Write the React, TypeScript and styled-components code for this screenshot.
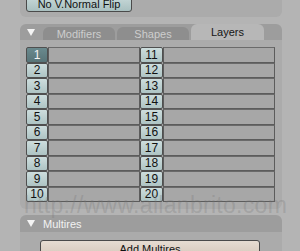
import React from 'react';
import styled, { createGlobalStyle } from 'styled-components';

const GlobalStyle = createGlobalStyle`
  html, body {
    margin: 0;
    padding: 0;
    background: #b3b3b3;
  }
  body {
    font-family: "Liberation Sans", Arial, sans-serif;
  }
`;

const Screen = styled.div`
  position: relative;
  width: 300px;
  height: 251px;
  overflow: hidden;
  background: #b4b4b4;
`;

const Column = styled.div`
  display: flex;
  flex-direction: column;
  width: 262px;
  margin-left: 20px;
`;

const TopPanel = styled.div`
  display: flex;
  align-items: flex-end;
  height: 17px;
  padding: 0 0 5px 6px;
  box-sizing: border-box;
  overflow: hidden;
  background: #ababab;
  border-radius: 0 0 6px 6px;
`;

const FlatButton = styled.button<{ $tone?: 'blue' | 'sand'; $w: number }>`
  flex: none;
  width: ${p => p.$w}px;
  height: 17px;
  padding: 0;
  border: 1px solid #4a4a4a;
  border-radius: 3px;
  font-family: inherit;
  font-size: 11px;
  color: #111;
  background: ${p =>
    p.$tone === 'sand'
      ? 'linear-gradient(#e6dcd2, #d6c8bb)'
      : 'linear-gradient(#c9dada, #a9c0c0)'};
`;

const Panel = styled.div<{ $gap: number }>`
  display: flex;
  flex-direction: column;
  margin-top: ${p => p.$gap}px;
`;

const Header = styled.div<{ $h: number }>`
  display: flex;
  align-items: flex-end;
  height: ${p => p.$h}px;
  background: #9d9d9d;
  border-radius: 6px 6px 0 0;
  position: relative;
`;

const Arrow = styled.span<{ $bottom: number }>`
  flex: none;
  width: 0;
  height: 0;
  margin: 0 8px ${p => p.$bottom}px 7px;
  border-left: 4px solid transparent;
  border-right: 4px solid transparent;
  border-top: 7px solid #f4f4f4;
`;

const Tabs = styled.div`
  display: flex;
  align-items: flex-end;
  gap: 2px;
  height: 100%;
`;

const Tab = styled.div<{ $active?: boolean; $w: number }>`
  display: flex;
  align-items: center;
  justify-content: center;
  width: ${p => p.$w}px;
  height: ${p => (p.$active ? 16 : 13)}px;
  border-radius: 6px 6px 0 0;
  font-size: 11px;
  color: ${p => (p.$active ? '#151515' : '#cdcdcd')};
  background: ${p => (p.$active ? '#b7b7b7' : '#8e8e8e')};
`;

const HeaderTitle = styled.span`
  font-size: 11px;
  color: #f2f2f2;
  align-self: center;
`;

const Body = styled.div<{ $h: number }>`
  height: ${p => p.$h}px;
  padding: 7px 7px 0 6px;
  box-sizing: border-box;
  background: #ababab;
  border-radius: 0 0 6px 6px;
`;

const Grid = styled.div`
  display: grid;
  grid-template-columns: 22px 92px 23px 112px;
  grid-auto-rows: 15.5px;
`;

const LayerNum = styled.div<{ $on?: boolean }>`
  display: flex;
  align-items: center;
  justify-content: center;
  border: 1px solid #4f4f4f;
  border-radius: 2px;
  font-size: 12px;
  color: ${p => (p.$on ? '#f4f4f4' : '#111')};
  background: ${p =>
    p.$on ? 'linear-gradient(#6a8a8e, #587478)' : 'linear-gradient(#cddddd, #aec4c4)'};
`;

const LayerField = styled.div`
  border: 1px solid #5c5c5c;
  border-top-color: #6a6a6a;
  background: #a7a7a7;
`;

const MultiresBody = styled.div`
  display: flex;
  justify-content: flex-start;
  height: 30px;
  padding: 8px 0 0 20px;
  box-sizing: border-box;
  background: #ababab;
`;

const Watermark = styled.div`
  position: absolute;
  left: 24px;
  top: 192px;
  font-size: 23px;
  letter-spacing: 0.3px;
  color: rgba(120, 120, 120, 0.3);
  white-space: nowrap;
  pointer-events: none;
`;

const rows = Array.from({ length: 10 }, (_, i) => i + 1);

export default function App() {
  return (
    <Screen>
      <GlobalStyle />
      <Column>
        <TopPanel>
          <FlatButton $w={106}>No V.Normal Flip</FlatButton>
        </TopPanel>

        <Panel $gap={7}>
          <Header $h={16}>
            <Arrow $bottom={4} />
            <Tabs>
              <Tab $w={72}>Modifiers</Tab>
              <Tab $w={72}>Shapes</Tab>
              <Tab $w={73} $active>
                Layers
              </Tab>
            </Tabs>
          </Header>
          <Body $h={169}>
            <Grid>
              {rows.map(n => (
                <React.Fragment key={n}>
                  <LayerNum $on={n === 1}>{n}</LayerNum>
                  <LayerField />
                  <LayerNum>{n + 10}</LayerNum>
                  <LayerField />
                </React.Fragment>
              ))}
            </Grid>
          </Body>
        </Panel>

        <Panel $gap={6}>
          <Header $h={17} style={{ alignItems: 'center', borderRadius: '6px 6px 0 0' }}>
            <Arrow $bottom={0} />
            <HeaderTitle>Multires</HeaderTitle>
          </Header>
          <MultiresBody>
            <FlatButton $w={220} $tone="sand">
              Add Multires
            </FlatButton>
          </MultiresBody>
        </Panel>
      </Column>
      <Watermark>http://www.allanbrito.com</Watermark>
    </Screen>
  );
}
